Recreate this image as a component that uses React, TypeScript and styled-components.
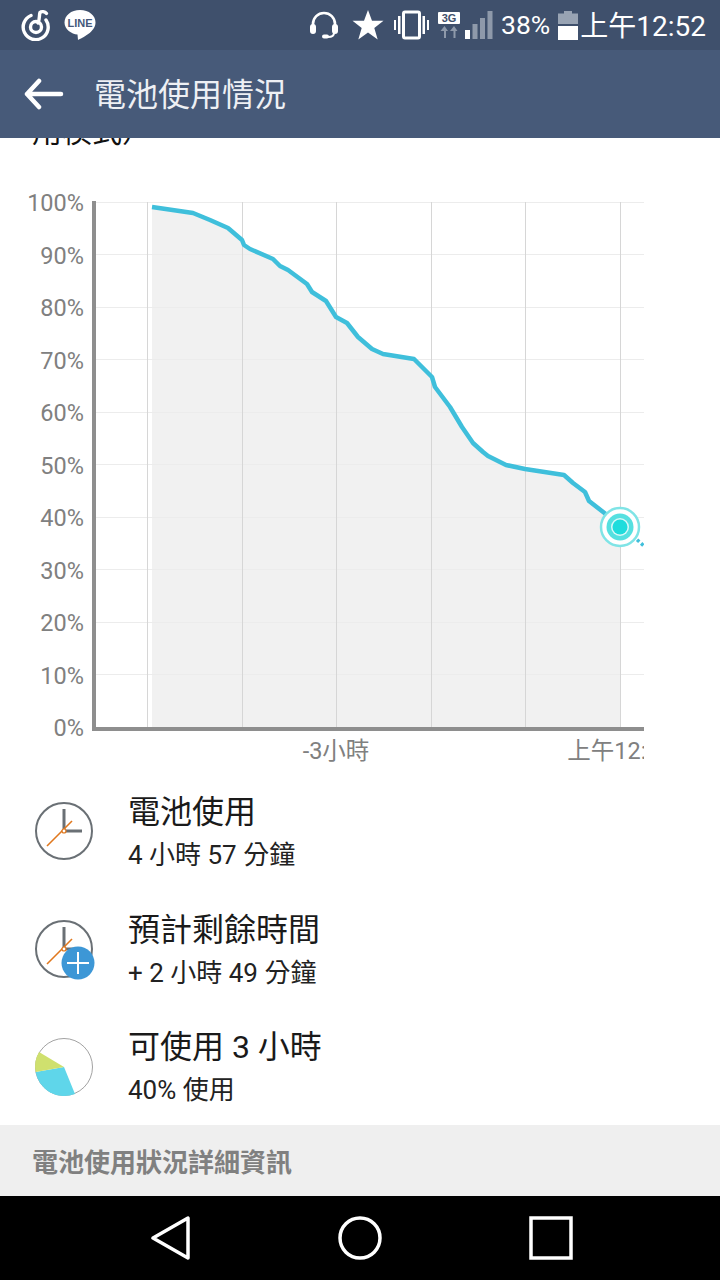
import styled, { createGlobalStyle } from "styled-components";

const FONT = `Roboto, "Noto Sans CJK TC", sans-serif`;

const batteryCurve: [number, number][] = [
  [152, 207], [193, 213], [210, 220], [228, 228], [242, 240], [244, 245], [250, 249],
  [273, 259], [280, 266], [288, 270], [307, 284], [312, 292], [326, 301], [336, 317],
  [347, 323], [358, 337], [372, 349], [383, 354], [414, 359], [432, 377], [435, 387],
  [450, 407], [462, 427], [473, 443], [483, 452], [488, 456], [506, 465], [525, 469],
  [564, 475], [573, 483], [585, 492], [589, 501], [607, 515], [620, 527],
];

const linePoints = batteryCurve.map(([x, y]) => `${x},${y}`).join(" ");
const areaPoints = `152,727 ${linePoints} 620,727`;
const percents = [100, 90, 80, 70, 60, 50, 40, 30, 20, 10, 0];
const percentY = (p: number) => 727 - p * 5.25;
const hourTicks = [147, 242, 336, 431, 525, 620];

function ClockFace() {
  return (
    <>
      <circle cx="32" cy="32" r="28" fill="none" stroke="#6a7075" strokeWidth="2" />
      <path d="M32 10V32H50" fill="none" stroke="#6a7075" strokeWidth="3" />
      <path d="M15 47L40 22" stroke="#e0781e" strokeWidth="1.6" />
      <circle cx="32" cy="32" r="2" fill="#fff" stroke="#e0781e" strokeWidth="1.2" />
    </>
  );
}

function UsageIcon() {
  return (
    <RowIcon viewBox="0 0 64 64">
      <ClockFace />
    </RowIcon>
  );
}

function RemainingIcon() {
  return (
    <RowIcon viewBox="0 0 64 64">
      <ClockFace />
      <circle cx="46" cy="46" r="16.5" fill="#3d97d6" />
      <path d="M46 35V57M35 46H57" stroke="#fff" strokeWidth="2" />
    </RowIcon>
  );
}

function PieIcon() {
  return (
    <RowIcon viewBox="0 0 64 64">
      <circle cx="32" cy="33" r="28.5" fill="#fff" stroke="#8a8a8a" strokeWidth="0.8" />
      <path d="M32 33L43 60A29 29 0 0 1 3.6 38Z" fill="#5fd6ea" />
      <path d="M32 33L3.6 38A29 29 0 0 1 7 18Z" fill="#cfe06e" />
    </RowIcon>
  );
}

const rows = [
  { title: "電池使用", detail: "4 小時 57 分鐘", icon: <UsageIcon /> },
  { title: "預計剩餘時間", detail: "+ 2 小時 49 分鐘", icon: <RemainingIcon /> },
  { title: "可使用 3 小時", detail: "40% 使用", icon: <PieIcon /> },
];

export default function App() {
  return (
    <>
      <GlobalStyle />
      <Screen>
        <StatusBar>
          <NotifyIcons>
            <svg width="30" height="32" viewBox="0 0 30 32" fill="none" stroke="#fff" strokeWidth="3.4">
              <path d="M10 6.500A12.500 12.500 0 1 0 25 11" strokeLinecap="round" />
              <circle cx="15" cy="18" r="5.500" />
              <path d="M17 14C19 10 18 6 19 3.500C20.500 2 24 2.500 25.500 4.500" strokeLinecap="round" />
            </svg>
            <svg width="34" height="34" viewBox="0 0 34 34">
              <path d="M17 2C8 2 1.500 7.500 1.500 14.500C1.500 21.500 8.500 26 14.500 26.500L15 32C19 30 32.500 24 32.500 14.500C32.500 7.500 26 2 17 2Z" fill="#fff" />
              <LineLabel x="17" y="18.500" textAnchor="middle">LINE</LineLabel>
            </svg>
          </NotifyIcons>
          <SystemIcons>
            <svg width="30" height="28" viewBox="0 0 30 28" fill="none">
              <path d="M4 16V13C4 6.500 9 2 15 2C21 2 26 6.500 26 13V16" stroke="#fff" strokeWidth="2.600" />
              <rect x="1" y="13" width="6" height="10" rx="3" fill="#fff" />
              <rect x="23" y="13" width="6" height="10" rx="3" fill="#fff" />
              <path d="M25 22C25 25 22 26 19 26" stroke="#fff" strokeWidth="2" />
              <rect x="13" y="23.500" width="7" height="4" rx="2" fill="#fff" />
            </svg>
            <StarIcon width="32" height="30" viewBox="0 0 32 30">
              <path d="M16 0L20 10.800H31.500L22.300 18L25.700 29.500L16 22.500L6.300 29.500L9.700 18L0.500 10.800H12Z" fill="#fff" />
            </StarIcon>
            <VibrateIcon width="37" height="30" viewBox="0 0 37 30">
              <rect x="10.500" y="2" width="16" height="26" rx="1.500" fill="none" stroke="#fff" strokeWidth="3" />
              <path d="M1 10V20H3V10ZM5 6V24H7.500V6ZM29.500 6V24H32V6ZM34 10V20H36V10Z" fill="#fff" />
            </VibrateIcon>
            <NetworkIcon width="24" height="28" viewBox="0 0 24 28">
              <rect x="1" y="1" width="22" height="12" rx="1" fill="#fff" />
              <NetworkLabel x="12" y="11" textAnchor="middle">3G</NetworkLabel>
              <path d="M7 27V20H3.500L7.500 15L11 20H9V27ZM16.500 27V20H13L17 15L20.500 20H18.500V27Z" fill="#8e99aa" />
            </NetworkIcon>
            <SignalIcon width="28" height="30" viewBox="0 0 28 30">
              <rect x="0" y="20" width="5" height="9" fill="#fff" />
              <rect x="7.500" y="14" width="5" height="15" fill="#8e99aa" />
              <rect x="15" y="8" width="5" height="21" fill="#8e99aa" />
              <rect x="22.500" y="1" width="5" height="28" fill="#8e99aa" />
            </SignalIcon>
            <Percent>38%</Percent>
            <BatteryIcon width="20" height="30" viewBox="0 0 20 30">
              <path d="M6 1H14V3.500H20V14H0V3.500H6Z" fill="#98a3b3" />
              <rect x="0" y="16" width="20" height="14" fill="#fff" />
            </BatteryIcon>
            <Clock>上午12:52</Clock>
          </SystemIcons>
        </StatusBar>

        <AppBar>
          <BackArrow width="40" height="32" viewBox="0 0 40 32" fill="none" stroke="#fff" strokeWidth="4.500" strokeLinecap="round" strokeLinejoin="round">
            <path d="M3 16H37M15 3L3 16L15 29" />
          </BackArrow>
          <AppTitle>電池使用情況</AppTitle>
        </AppBar>

        <Content>
          <ScrolledNote>用模式）</ScrolledNote>

          <Chart viewBox="0 190 644 575" width="644" height="575">
            <polygon points={areaPoints} fill="#f1f1f1" />
            {percents.map((p) => (
              <line key={p} x1="96" x2="644" y1={percentY(p)} y2={percentY(p)} stroke="#ececec" strokeWidth="1" shapeRendering="crispEdges" />
            ))}
            {hourTicks.map((x) => (
              <line key={x} x1={x} x2={x} y1="202" y2="727" stroke="#d6d6d6" strokeWidth="1" shapeRendering="crispEdges" />
            ))}
            <path d="M94 201V729H644" fill="none" stroke="#8e8e8e" strokeWidth="4" />
            {percents.map((p) => (
              <AxisText key={p} x="84" y={percentY(p) + 9} textAnchor="end">
                {p}%
              </AxisText>
            ))}
            <AxisText x="336" y="759" textAnchor="middle">-3小時</AxisText>
            <AxisText x="620" y="759" textAnchor="middle">上午12:52</AxisText>
            <polyline points={linePoints} fill="none" stroke="#3fbfdb" strokeWidth="4.500" strokeLinejoin="round" />
            <path d="M633 536L644 546" stroke="#3fbfdb" strokeWidth="3.500" strokeDasharray="3 2.500" />
            <circle cx="620" cy="527" r="19" fill="#fff" stroke="#7fe4e6" strokeWidth="2.500" />
            <circle cx="620" cy="527" r="13.500" fill="#55e0e0" />
            <circle cx="620" cy="527" r="9" fill="#d8f8f8" />
            <circle cx="620" cy="527" r="7.500" fill="#1fdcdc" />
          </Chart>

          <StatList>
            {rows.map((row) => (
              <StatRow key={row.title}>
                <IconSlot>{row.icon}</IconSlot>
                <StatText>
                  <StatTitle>{row.title}</StatTitle>
                  <StatDetail>{row.detail}</StatDetail>
                </StatText>
              </StatRow>
            ))}
          </StatList>

          <SectionHeader>電池使用狀況詳細資訊</SectionHeader>
        </Content>

        <NavBar>
          <svg width="40" height="44" viewBox="0 0 40 44" fill="none" stroke="#fff" strokeWidth="3.500" strokeLinejoin="round">
            <path d="M37 2V42L2 22Z" />
          </svg>
          <svg width="44" height="44" viewBox="0 0 44 44" fill="none" stroke="#fff" strokeWidth="3.500">
            <circle cx="22" cy="22" r="20" />
          </svg>
          <svg width="44" height="44" viewBox="0 0 44 44" fill="none" stroke="#fff" strokeWidth="3.500">
            <rect x="2" y="2" width="40" height="40" />
          </svg>
        </NavBar>
      </Screen>
    </>
  );
}

const GlobalStyle = createGlobalStyle`
  html, body {
    margin: 0;
    padding: 0;
    background: #fff;
  }
`;

const Screen = styled.div`
  width: 720px;
  height: 1280px;
  display: flex;
  flex-direction: column;
  overflow: hidden;
  font-family: ${FONT};
`;

const StatusBar = styled.div`
  height: 50px;
  flex: none;
  display: flex;
  align-items: center;
  justify-content: space-between;
  padding: 0 14px 0 21px;
  background: #3f506c;
`;

const NotifyIcons = styled.div`
  display: flex;
  align-items: center;
  gap: 12px;
`;

const SystemIcons = styled.div`
  display: flex;
  align-items: center;
`;

const StarIcon = styled.svg`
  margin-left: 13px;
`;

const VibrateIcon = styled.svg`
  margin-left: 9px;
`;

const NetworkIcon = styled.svg`
  margin-left: 7px;
`;

const SignalIcon = styled.svg`
  margin-left: 4px;
`;

const BatteryIcon = styled.svg`
  margin-left: 8px;
`;

const Percent = styled.span`
  margin: 0 0 2px 8px;
  font-size: 26.5px;
  color: #fff;
`;

const Clock = styled.span`
  margin: 0 0 2px 2px;
  font-size: 28px;
  color: #fff;
`;

const LineLabel = styled.text`
  font: 800 11px "Liberation Sans", sans-serif;
  fill: #45587a;
`;

const NetworkLabel = styled.text`
  font: 700 11px "Liberation Sans", sans-serif;
  fill: #3f506c;
`;

const AppBar = styled.div`
  height: 88px;
  flex: none;
  display: flex;
  align-items: center;
  padding-left: 24px;
  background: #475a79;
`;

const BackArrow = styled.svg`
  flex: none;
`;

const AppTitle = styled.h1`
  margin: 0 0 5px 30px;
  font-size: 32px;
  font-weight: 400;
  color: #eef0f4;
`;

const Content = styled.div`
  flex: 1;
  min-height: 0;
  display: flex;
  flex-direction: column;
  overflow: hidden;
  background: #fff;
`;

const ScrolledNote = styled.div`
  flex: none;
  height: 80px;
  margin-top: -28px;
  padding-left: 32px;
  font-size: 30px;
  line-height: 44px;
  color: #111;
`;

const Chart = styled.svg`
  display: block;
  flex: none;
  background: #fff;
`;

const AxisText = styled.text`
  font-family: ${FONT};
  font-size: 23.5px;
  fill: #808080;
`;

const StatList = styled.div`
  flex: none;
  display: flex;
  flex-direction: column;
  margin-top: 7px;
`;

const StatRow = styled.div`
  height: 117.7px;
  display: flex;
  align-items: center;
`;

const IconSlot = styled.div`
  width: 128px;
  flex: none;
  display: flex;
  padding-left: 32px;
  box-sizing: border-box;
`;

const RowIcon = styled.svg`
  width: 64px;
  height: 64px;
`;

const StatText = styled.div`
  display: flex;
  flex-direction: column;
  gap: 8px;
  padding-top: 2px;
`;

const StatTitle = styled.div`
  font-size: 32px;
  line-height: 38px;
  color: #1a1a1a;
`;

const StatDetail = styled.div`
  font-size: 26px;
  line-height: 32px;
  color: #222;
`;

const SectionHeader = styled.div`
  height: 71px;
  flex: none;
  display: flex;
  align-items: center;
  padding-left: 32px;
  background: #efefef;
  font-size: 26px;
  font-weight: 700;
  color: #808080;
`;

const NavBar = styled.nav`
  height: 84px;
  flex: none;
  display: flex;
  align-items: center;
  justify-content: center;
  gap: 147px;
  padding-left: 3px;
  background: #000;
`;
